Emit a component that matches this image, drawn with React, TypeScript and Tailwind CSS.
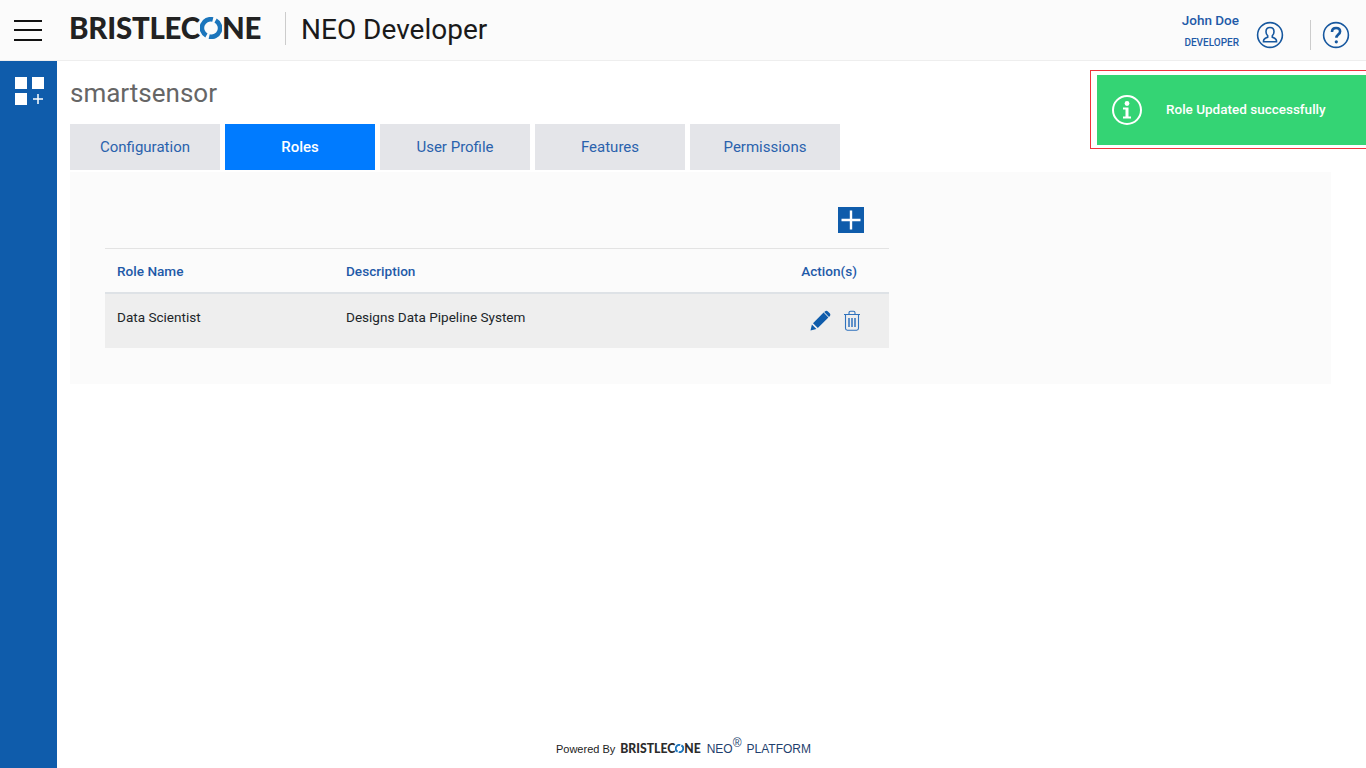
const tabs = ["Configuration", "Roles", "User Profile", "Features", "Permissions"];

const LogoRing = ({ size }: { size: number }) => (
  <svg width={size} height={size} viewBox="0 0 24 24" fill="none" className="shrink-0">
    <path d="M7 20.2A9.5 9.5 0 0 1 14 2.7" stroke="#1b75bc" strokeWidth="5" />
    <path d="M17 3.8A9.5 9.5 0 0 1 10 21.3" stroke="#1b75bc" strokeWidth="5" />
  </svg>
);

const Logo = ({ small }: { small?: boolean }) =>
  small ? (
    <span className="flex items-center text-[12.2px] font-black leading-none text-[#2b2b2b] font-['Lato',sans-serif]">
      BRISTLEC
      <LogoRing size={9} />
      NE
    </span>
  ) : (
    <span className="mb-[5px] flex items-center text-[29.4px] font-black leading-none tracking-[-0.2px] text-[#222222] font-['Lato',sans-serif]">
      BRISTLEC
      <LogoRing size={22} />
      NE
    </span>
  );

export default function App() {
  return (
    <div className="relative flex h-[768px] w-[1366px] flex-col overflow-hidden bg-white font-['Roboto',sans-serif]">
      <header className="flex h-[61px] shrink-0 items-center border-b border-[#eeeeee] bg-[#fbfbfb]">
        <div className="ml-3.5 flex w-7 flex-col gap-[7.5px]">
          <span className="h-0.5 bg-[#111111]" />
          <span className="h-0.5 bg-[#111111]" />
          <span className="h-0.5 bg-[#111111]" />
        </div>
        <div className="ml-[27px] flex h-8 w-[193px] items-center">
          <Logo />
        </div>
        <div className="mb-[3px] ml-[23px] h-[33px] w-px bg-[#cccccc]" />
        <span className="ml-[15px] text-[28px] leading-none text-[#1a1a1a]">NEO Developer</span>
        <div className="ml-auto flex flex-col items-end">
          <span className="mb-0.5 text-[13.5px] font-medium leading-4 text-[#1f5aa8]">John Doe</span>
          <span className="mt-[7px] text-[10px] font-medium leading-3 text-[#1f5aa8]">DEVELOPER</span>
        </div>
        <svg width="28" height="28" viewBox="0 0 28 28" fill="none" stroke="#17589f" strokeWidth="1.6" className="ml-[17px] mt-[10px]">
          <circle cx="14" cy="14" r="12.4" />
          <path d="M14 6.5c-2.7 0-4 2-4 4.2 0 1.8.8 3.2 1.7 4.1v1.4c-1.8.8-4 1.3-4.2 3.6v1h13v-1c-.2-2.3-2.4-2.8-4.2-3.6v-1.4c.9-.9 1.700-2.300 1.700-4.100 0-2.200-1.300-4.200-4-4.200z" />
        </svg>
        <div className="ml-[26px] mt-[10px] h-[30px] w-px bg-[#cccccc]" />
        <svg width="28" height="28" viewBox="0 0 28 28" fill="none" stroke="#17589f" strokeWidth="1.6" className="ml-[11px] mr-[16px] mt-[10px]">
          <circle cx="14" cy="14" r="12.4" />
          <path d="M10 11c0-2.500 1.800-4 4.100-4 2.300 0 4 1.400 4 3.500 0 3-3.700 3.200-3.700 6.300" strokeWidth="2.600" />
          <circle cx="14.300" cy="20.800" r="1.600" fill="#17589f" stroke="none" />
        </svg>
      </header>

      <div className="flex flex-1">
        <aside className="flex w-[57px] shrink-0 justify-start bg-[#0f5cab] pl-[15px] pt-4">
          <div className="grid h-[30px] w-[30px] grid-cols-[12px_12px] grid-rows-[12px_12px] gap-x-[5px] gap-y-[4px]">
            <span className="bg-white" />
            <span className="bg-white" />
            <span className="bg-white" />
            <svg width="12" height="12" viewBox="0 0 12 12" stroke="white" strokeWidth="1.500">
              <path d="M1 6h10M6 1v10" />
            </svg>
          </div>
        </aside>

        <main className="flex flex-1 flex-col pl-[13px] pr-[35px]">
          <h1 className="mt-[17px] text-[26px] leading-[30px] text-[#666666]">smartsensor</h1>
          <nav className="mt-4 flex gap-[5px]">
            {tabs.map((tab) =>
              tab === "Roles" ? (
                <div key={tab} className="flex h-[46px] w-[150px] items-center justify-center bg-[#007bff] text-[15px] font-medium text-white">
                  {tab}
                </div>
              ) : (
                <div key={tab} className="flex h-[46px] w-[150px] items-center justify-center bg-[#e4e5e9] text-[15px] text-[#2a62ad]">
                  {tab}
                </div>
              ),
            )}
          </nav>

          <section className="mt-0.5 h-[212px] bg-[#fbfbfb] px-[35px] pt-[35px]">
            <div className="w-[784px]">
              <div className="flex justify-end pr-[25px]">
                <div className="flex h-[26px] w-[26px] items-center justify-center bg-[#0f5cab]">
                  <svg width="22" height="22" viewBox="0 0 22 22" stroke="white" strokeWidth="2.400">
                    <path d="M1.500 11h19M11 1.500v19" />
                  </svg>
                </div>
              </div>
              <div className="mt-[15px] flex h-[46px] items-center border-y border-t-[#e3e3e3] border-b-[#dee2e6] border-b-2 pt-0.5 text-[13.6px] font-medium text-[#1f5aa8]">
                <span className="ml-3 w-[229px]">Role Name</span>
                <span>Description</span>
                <span className="ml-auto mr-8">Action(s)</span>
              </div>
              <div className="flex h-[54px] bg-[#eeeeee] text-[13.55px] text-[#212529]">
                <span className="ml-3 mt-[13px] w-[229px]">Data Scientist</span>
                <span className="mt-[13px]">Designs Data Pipeline System</span>
                <div className="ml-auto mr-[28px] mt-[15px] flex h-[22px] items-center gap-3">
                  <svg width="21" height="21" viewBox="0 0 21 21" fill="#0f5cab">
                    <path d="M0.500 20.500l1.400-5.900 4.500 4.500zM3 13.200L13.600 2.600l4.800 4.800L7.800 18zM14.900 1.400c.9-.9 2.100-.9 3 0l1.800 1.800c.9.900.9 2.100 0 3l-.7.700-4.800-4.800z" />
                  </svg>
                  <svg width="18" height="21" viewBox="0 0 18 21" fill="none" stroke="#2f72bd" strokeWidth="1.100">
                    <path d="M1 4.500h16M6 4.500V2.800c0-1 .6-1.600 1.500-1.600h3c.9 0 1.500.6 1.500 1.600v1.700" />
                    <path d="M2.500 4.500v13.800c0 1.100.7 1.900 1.800 1.900h9.400c1.100 0 1.800-.8 1.800-1.900V4.500" />
                    <path d="M6 8v9M9 8v9M12 8v9" strokeWidth="1.500" />
                  </svg>
                </div>
              </div>
            </div>
          </section>

          <footer className="mt-auto mb-[11px] flex items-end justify-center pr-[34px] font-['Liberation_Sans',sans-serif] text-[#222222]">
            <span className="text-[11px] leading-4">Powered By</span>
            <span className="ml-[5px] flex h-4 items-center">
              <Logo small />
            </span>
            <span className="ml-[6px] text-xs leading-4 text-[#1f3f6e]">NEO</span>
            <sup className="top-0 mb-2 text-xs leading-3 text-[#1f3f6e]">®</sup>
            <span className="ml-[5px] text-xs leading-4 text-[#1f3f6e]">PLATFORM</span>
          </footer>
        </main>
      </div>

      <div className="absolute right-0 top-[70px] h-[79px] w-[276px] border border-r-0 border-[#f0313c] pl-1.5 pt-1">
        <div className="flex h-[70px] items-center bg-[#34d474] pl-[15px] text-white">
          <svg width="30" height="30" viewBox="0 0 30 30" fill="none" stroke="white" strokeWidth="2">
            <circle cx="15" cy="15" r="14" />
            <circle cx="15" cy="8.500" r="2.400" fill="white" stroke="none" />
            <path d="M11 12.500h5.500v9H19v2h-8v-2h2.500v-7H11z" fill="white" stroke="none" />
          </svg>
          <span className="mb-0.5 ml-[24px] text-[13.5px] font-medium">Role Updated successfully</span>
        </div>
      </div>
    </div>
  );
}
